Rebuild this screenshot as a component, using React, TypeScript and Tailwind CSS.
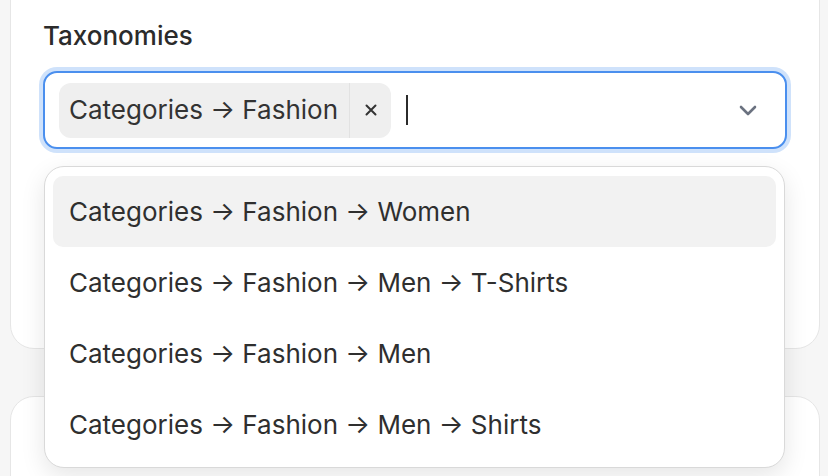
import React from "react";

const options = [
  "Categories → Fashion → Women",
  "Categories → Fashion → Men → T-Shirts",
  "Categories → Fashion → Men",
  "Categories → Fashion → Men → Shirts",
];

export default function App() {
  return (
    <div
      className="w-[828px] h-[476px] overflow-hidden bg-[#f6f6f6] pl-[10px] pr-[8px] text-[#2f2f2f]"
      style={{ fontFamily: "Inter, 'Noto Sans', sans-serif" }}
    >
      <div className="flex flex-col gap-[47px]">
        <div className="relative mt-[-30px] h-[379px] rounded-[24px] border border-[#e6e6e6] bg-white px-[32px] pt-[49px]">
          <div className="text-[26px] leading-[32px] font-medium text-[#2b2b2b]">Taxonomies</div>
          <div className="relative mt-[19px]">
            <div className="flex h-[78px] items-center rounded-[14px] border-2 border-[#4a8fee] bg-white pl-[14px] pr-[28px] ring-4 ring-[#cfe2fb]">
              <div className="flex h-[55px] items-center rounded-[12px] bg-[#efefef]">
                <span className="pl-[10px] pr-[11px] text-[26px] leading-[32px] text-[#333]">Categories → Fashion</span>
                <span className="h-full w-px bg-[#e2e2e2]" />
                <span className="flex w-[41px] items-center justify-center">
                  <svg width="12" height="12" viewBox="0 0 12 12" fill="none">
                    <path d="M1.5 1.5l9 9M10.5 1.5l-9 9" stroke="#333" strokeWidth="2" strokeLinecap="round" />
                  </svg>
                </span>
              </div>
              <span className="ml-[15px] h-[30px] w-[2px] bg-[#2b2b2b]" />
              <div className="flex-1" />
              <svg width="18" height="11" viewBox="0 0 18 11" fill="none">
                <path d="M2 2l7 7 7-7" stroke="#6b7280" strokeWidth="2.6" strokeLinecap="round" strokeLinejoin="round" />
              </svg>
            </div>
            <div className="absolute left-[1px] top-[95px] z-10 w-[741px] rounded-[20px] border border-[#d9d9d9] bg-white px-[8px] pt-[9px] pb-[7px] shadow-[0_8px_24px_rgba(0,0,0,0.10)]">
              {options.map((o, i) => (
                <div
                  key={o}
                  className={
                    i === 0
                      ? "flex h-[71px] items-center rounded-[10px] bg-[#f2f2f2] px-[16px] text-[26px] text-[#2f2f2f]"
                      : "flex h-[71px] items-center rounded-[10px] px-[16px] text-[26px] text-[#2f2f2f]"
                  }
                >
                  {o}
                </div>
              ))}
            </div>
          </div>
        </div>
        <div className="h-[200px] rounded-[24px] border border-[#e6e6e6] bg-white" />
      </div>
    </div>
  );
}
